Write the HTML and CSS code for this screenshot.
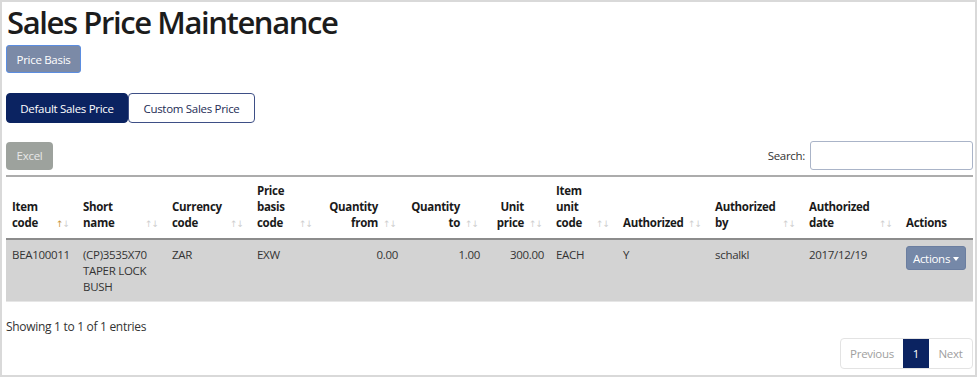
FILE: index.html
```html
<!DOCTYPE html>
<html lang="en">
<head>
    <meta charset="UTF-8">
    <title>Sales Price Maintenance</title>
    <link rel="stylesheet" href="styles.css">
</head>
<body>
    <div class="frame">
        <h1>Sales Price Maintenance</h1>

        <button class="btn btn-basis">Price Basis</button>

        <div class="tabs">
            <button class="tab active">Default Sales Price</button>
            <button class="tab">Custom Sales Price</button>
        </div>

        <div class="toolbar">
            <button class="btn btn-excel">Excel</button>
            <label class="search">Search: <input type="text"></label>
        </div>

        <table class="grid">
            <colgroup>
                <col style="width:71px"><col style="width:89px"><col style="width:85px"><col style="width:69px">
                <col style="width:84px"><col style="width:82px"><col style="width:64px"><col style="width:67px">
                <col style="width:92px"><col style="width:94px"><col style="width:97px"><col style="width:73px">
            </colgroup>
            <thead>
                <tr>
                    <th class="sort asc">Item<br>code<i class="arrows"><b>&#8593;</b><b>&#8595;</b></i></th>
                    <th class="sort">Short<br>name<i class="arrows"><b>&#8593;</b><b>&#8595;</b></i></th>
                    <th class="sort">Currency<br>code<i class="arrows"><b>&#8593;</b><b>&#8595;</b></i></th>
                    <th class="sort">Price<br>basis<br>code<i class="arrows"><b>&#8593;</b><b>&#8595;</b></i></th>
                    <th class="sort num">Quantity<br>from<i class="arrows"><b>&#8593;</b><b>&#8595;</b></i></th>
                    <th class="sort num">Quantity<br>to<i class="arrows"><b>&#8593;</b><b>&#8595;</b></i></th>
                    <th class="sort num">Unit<br>price<i class="arrows"><b>&#8593;</b><b>&#8595;</b></i></th>
                    <th class="sort">Item<br>unit<br>code<i class="arrows"><b>&#8593;</b><b>&#8595;</b></i></th>
                    <th class="sort">Authorized<i class="arrows"><b>&#8593;</b><b>&#8595;</b></i></th>
                    <th class="sort">Authorized<br>by<i class="arrows"><b>&#8593;</b><b>&#8595;</b></i></th>
                    <th class="sort">Authorized<br>date<i class="arrows"><b>&#8593;</b><b>&#8595;</b></i></th>
                    <th>Actions</th>
                </tr>
            </thead>
            <tbody>
                <tr>
                    <td>BEA100011</td>
                    <td>(CP)3535X70 TAPER LOCK BUSH</td>
                    <td>ZAR</td>
                    <td>EXW</td>
                    <td class="num">0.00</td>
                    <td class="num">1.00</td>
                    <td class="num">300.00</td>
                    <td>EACH</td>
                    <td>Y</td>
                    <td>schalkl</td>
                    <td>2017/12/19</td>
                    <td><button class="btn btn-actions">Actions<span class="caret"></span></button></td>
                </tr>
            </tbody>
        </table>

        <div class="footer">
            <div class="info">Showing 1 to 1 of 1 entries</div>
            <div class="pager">
                <span class="page prev">Previous</span>
                <span class="page current">1</span>
                <span class="page next">Next</span>
            </div>
        </div>
    </div>
</body>
</html>
```

FILE: styles.css
```css
body {
    margin: 0;
    font-family: 'Open Sans', 'Noto Sans', sans-serif;
    font-size: 11.5px;
    letter-spacing: -0.3px;
    color: #333;
    background: white;
}

.frame {
    width: 977px;
    height: 377px;
    box-sizing: border-box;
    border: 2px solid #d9d9d9;
    padding: 0 2px 0 4px;
}

h1 {
    font-size: 31px;
    font-weight: 600;
    letter-spacing: -1.4px;
    color: #1c1c1c;
    margin: 0;
    line-height: 40px;
    padding-left: 1px;
}

.btn {
    font-family: inherit;
    font-size: 11.5px;
    letter-spacing: -0.3px;
    border-radius: 3px;
    cursor: pointer;
    white-space: nowrap;
}

.btn-basis {
    margin-top: 3px;
    height: 28px;
    width: 75px;
    padding: 0;
    background: #7b8aa7;
    color: white;
    border: 1px solid #5b8de0;
}

.tabs {
    display: flex;
    margin-top: 20px;
}

.tab {
    font-family: inherit;
    font-size: 11.5px;
    letter-spacing: -0.3px;
    height: 30px;
    padding: 0;
    white-space: nowrap;
    background: white;
    color: #1d2c55;
    border: 1px solid #3e4f86;
    border-radius: 4px;
    cursor: pointer;
}

.tab.active {
    width: 122px;
    background: #0b2361;
    color: white;
    border-color: #0b2361;
}

.tab:not(.active) {
    width: 127px;
}

.toolbar {
    display: flex;
    justify-content: space-between;
    align-items: center;
    margin-top: 17px;
    height: 31px;
}

.btn-excel {
    height: 28px;
    width: 47px;
    padding: 0;
    background: #9da29d;
    color: #e8e8e8;
    border: none;
    border-radius: 4px;
}

.search {
    color: #333;
    display: flex;
    align-items: center;
    gap: 5px;
}

.search input {
    width: 163px;
    height: 29px;
    box-sizing: border-box;
    border: 1px solid #aab4c8;
    border-radius: 3px;
    margin: 0;
    padding: 0 4px;
}

.grid {
    margin-top: 4px;
    width: 967px;
    border-collapse: collapse;
    table-layout: fixed;
    border-top: 2px solid #acacac;
}

.grid th {
    text-align: left;
    vertical-align: bottom;
    font-weight: 700;
    color: #1a1a1a;
    line-height: 16px;
    padding: 6px 6px 7px 6px;
    border-bottom: 2px solid #8c8c8c;
}

.grid th.sort {
    position: relative;
    padding-right: 24px;
}

.grid th.num {
    text-align: right;
    padding-right: 26px;
}

.arrows {
    position: absolute;
    right: 8px;
    bottom: 9px;
    display: flex;
    font-style: normal;
    font-family: 'DejaVu Sans', sans-serif;
    font-size: 9px;
    letter-spacing: 0;
    line-height: 10px;
    color: #cfcfcf;
}

.arrows b {
    font-weight: 400;
    margin-right: -1px;
}

.asc .arrows b:first-child {
    color: #c8983f;
}

.grid tbody tr {
    background: #d3d3d3;
}

.grid td {
    vertical-align: top;
    line-height: 16px;
    padding: 7px 6px 6px 6px;
    color: #333;
    border-bottom: 1px solid #e6e6e6;
}

.grid td.num {
    text-align: right;
}

.btn-actions {
    height: 24px;
    width: 60px;
    padding: 0;
    margin-top: -1px;
    background: #7588a8;
    color: white;
    border: 1px solid #6b7ea0;
}

.caret {
    display: inline-block;
    border-top: 4px solid white;
    border-left: 3px solid transparent;
    border-right: 3px solid transparent;
    vertical-align: middle;
    margin-left: 3px;
}

.footer {
    display: flex;
    justify-content: space-between;
    align-items: flex-start;
    margin-top: 17px;
}

.info {
    color: #333;
    font-size: 12px;
    line-height: 16px;
}

.pager {
    display: flex;
    margin-top: 19px;
    border: 1px solid #e3e3e3;
    border-radius: 4px;
    height: 29px;
}

.page {
    display: flex;
    align-items: center;
    justify-content: center;
    color: #a0a0a0;
}

.page.prev {
    width: 62px;
}

.page.current {
    width: 26px;
    background: #0b2361;
    color: white;
}

.page.next {
    width: 43px;
}
```
